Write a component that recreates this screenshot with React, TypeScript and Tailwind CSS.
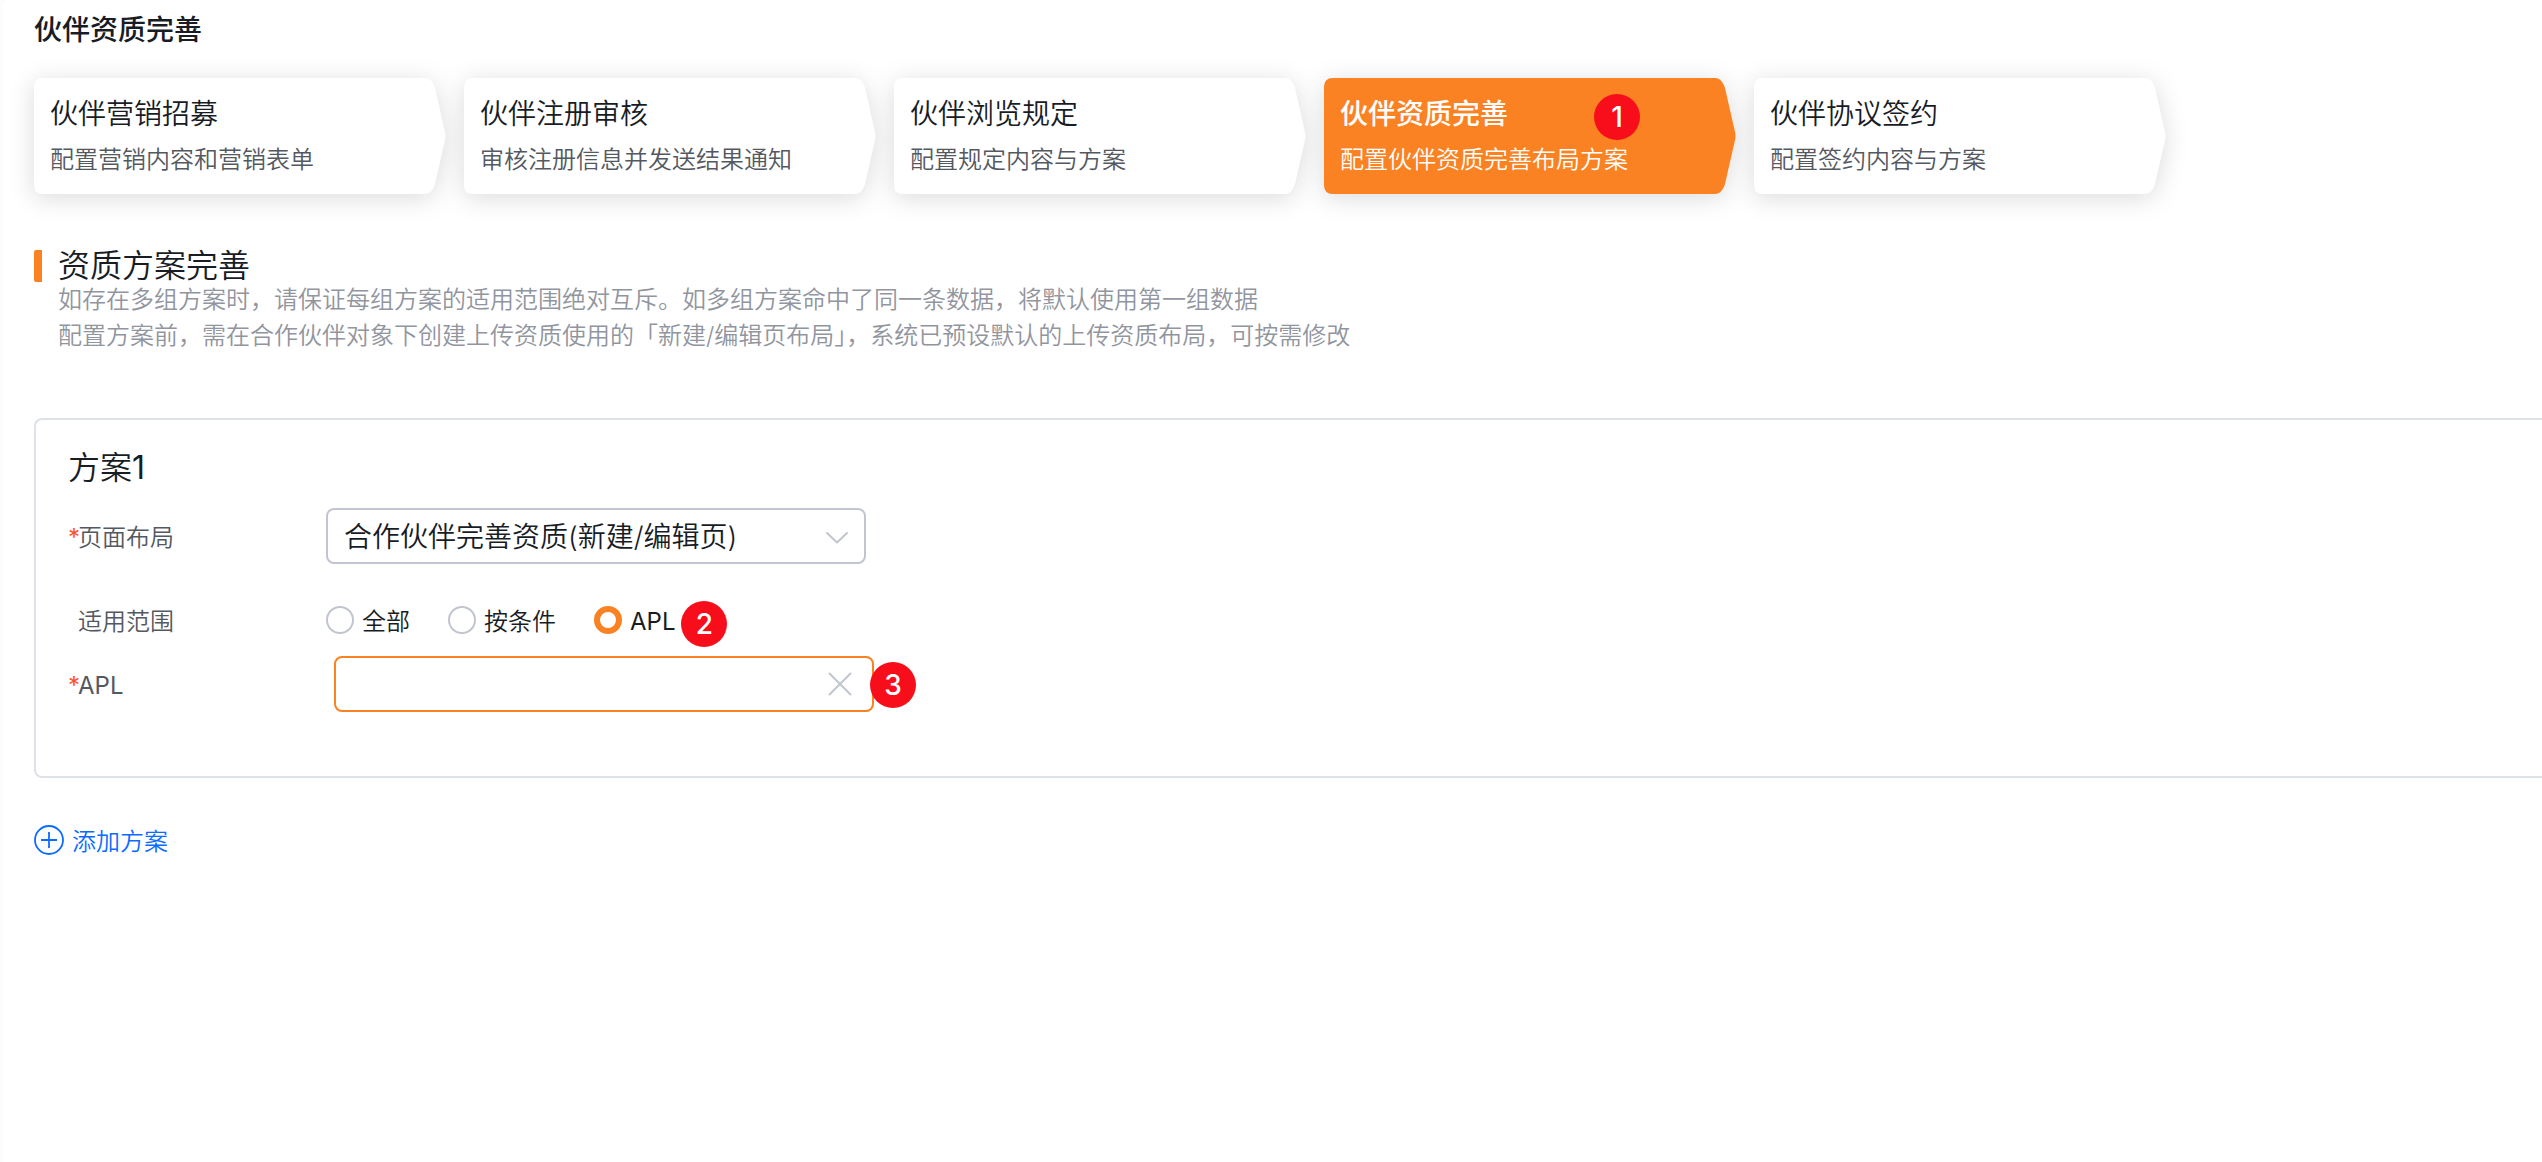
type Step = {
  title: string
  desc: string
  badge?: number
}

const steps: Step[] = [
  { title: '伙伴营销招募', desc: '配置营销内容和营销表单' },
  { title: '伙伴注册审核', desc: '审核注册信息并发送结果通知' },
  { title: '伙伴浏览规定', desc: '配置规定内容与方案' },
  { title: '伙伴资质完善', desc: '配置伙伴资质完善布局方案', badge: 1 },
  { title: '伙伴协议签约', desc: '配置签约内容与方案' },
]

const ACTIVE_STEP = 3

const scopes = [
  { value: 'all', label: '全部' },
  { value: 'condition', label: '按条件' },
  { value: 'apl', label: 'APL' },
]

function Badge({ n }: { n: number }) {
  return (
    <span className="flex size-[46px] items-center justify-center rounded-full bg-[#f80d1b] text-[28px] leading-none font-medium text-white">
      {n}
    </span>
  )
}

function StepCard({ step, active }: { step: Step; active: boolean }) {
  return (
    <li className="relative w-[412px] shrink-0">
      <svg
        className={
          active
            ? 'absolute inset-0 size-full overflow-visible text-[#fa8223] drop-shadow-[0_4px_12px_rgba(0,0,0,0.14)]'
            : 'absolute inset-0 size-full overflow-visible text-white drop-shadow-[0_4px_12px_rgba(0,0,0,0.14)]'
        }
        viewBox="0 0 412 116"
        preserveAspectRatio="none"
        fill="currentColor"
        aria-hidden="true"
      >
        <path d="M9 0H391C396 0 399 4 401 10L411 54Q412 58 411 62L401 106C399 112 396 116 391 116H9Q0 116 0 107V9Q0 0 9 0Z" />
      </svg>
      <a href="#" className="relative block px-4 pt-4 pb-3">
        <span className={active ? 'block text-[28px] leading-10 font-medium text-white' : 'block text-[28px] leading-10 text-[#181c25]'}>
          {step.title}
        </span>
        <span className={active ? 'block pt-1 text-2xl leading-11 text-white' : 'block pt-1 text-2xl leading-11 text-[#545861]'}>
          {step.desc}
        </span>
      </a>
      {step.badge && (
        <div className="absolute top-4 right-24">
          <Badge n={step.badge} />
        </div>
      )}
    </li>
  )
}

function FieldLabel({ text, htmlFor, required }: { text: string; htmlFor?: string; required?: boolean }) {
  return (
    <label htmlFor={htmlFor} className="flex w-[258px] shrink-0 pt-1 text-2xl leading-9 text-[#545861]">
      <span className="w-2.5 font-normal text-[#ff522a]">{required ? '*' : ''}</span>
      <span className={text === 'APL' ? 'font-normal' : ''}>{text}</span>
    </label>
  )
}

export default function App() {
  return (
    <div className="min-h-screen overflow-hidden bg-[#fcfcfc] pl-0.5 font-['Inter','Noto_Sans_CJK_SC',sans-serif] font-[350] text-[#181c25]">
      <main className="min-h-screen rounded-tl-lg bg-white pt-2 pl-8">
        <h1 className="pt-0.5 text-[28px] leading-10 font-medium">伙伴资质完善</h1>

        <ol className="mt-7 flex gap-[18px]">
          {steps.map((step, i) => (
            <StepCard key={step.title} step={step} active={i === ACTIVE_STEP} />
          ))}
        </ol>

        <section className="mt-14">
          <div className="flex items-center gap-4">
            <span className="h-8 w-2 rounded-l-xs bg-[#fa8223]" />
            <h2 className="text-[32px] leading-8">资质方案完善</h2>
          </div>
          <div className="pl-6 text-2xl leading-9 text-[#91959e]">
            <p>如存在多组方案时，请保证每组方案的适用范围绝对互斥。如多组方案命中了同一条数据，将默认使用第一组数据</p>
            <p>配置方案前，需在合作伙伴对象下创建上传资质使用的「新建/编辑页布局」，系统已预设默认的上传资质布局，可按需修改</p>
          </div>
        </section>

        <section className="mt-16 rounded-l-lg border-2 border-r-0 border-[#dee1e8] px-8 pt-7 pb-16">
          <h3 className="text-[32px] leading-10">
            方案<span className="font-normal">1</span>
          </h3>

          <div className="mt-5 flex items-center">
            <FieldLabel text="页面布局" htmlFor="layout" required />
            <div className="relative">
              <select
                id="layout"
                className="block h-14 w-[540px] appearance-none rounded-lg border-2 border-[#c1c5ce] bg-white px-4 pt-0.5 text-[28px]"
              >
                <option>合作伙伴完善资质(新建/编辑页)</option>
              </select>
              <svg
                className="pointer-events-none absolute top-4 right-4 size-6 text-[#c1c5ce]"
                viewBox="0 0 24 24"
                fill="none"
                stroke="currentColor"
                strokeWidth="2"
                strokeLinecap="round"
                strokeLinejoin="round"
                aria-hidden="true"
              >
                <path d="M1 9L11 18.5L21 9" />
              </svg>
            </div>
          </div>

          <div className="mt-8 flex h-12 items-center">
            <FieldLabel text="适用范围" />
            <div className="flex gap-[38px]">
              {scopes.map((scope) => (
                <label key={scope.value} className="flex items-center gap-2 text-2xl leading-9">
                  <input
                    type="radio"
                    name="scope"
                    value={scope.value}
                    defaultChecked={scope.value === 'apl'}
                    className="size-7 appearance-none rounded-full border-2 border-[#c1c5ce] bg-white checked:border-6 checked:border-[#fa8223]"
                  />
                  <span className={scope.value === 'apl' ? 'pt-1 font-normal' : 'pt-1'}>{scope.label}</span>
                </label>
              ))}
            </div>
            <div className="pt-2 pl-1.5">
              <Badge n={2} />
            </div>
          </div>

          <div className="mt-3 flex items-center">
            <FieldLabel text="APL" htmlFor="apl" required />
            <div className="relative ml-2">
              <input
                id="apl"
                type="text"
                className="block h-14 w-[540px] rounded-lg border-2 border-[#fa8223] bg-white pr-14 pl-4 text-[28px] outline-none"
              />
              <button type="button" aria-label="清空" className="absolute top-4 right-[22px] text-[#c1c5ce]">
                <svg
                  className="size-6"
                  viewBox="0 0 24 24"
                  fill="none"
                  stroke="currentColor"
                  strokeWidth="2"
                  strokeLinecap="round"
                  aria-hidden="true"
                >
                  <path d="M1.5 1.5L22.5 22.5M22.5 1.5L1.5 22.5" />
                </svg>
              </button>
              <div className="absolute top-1.5 -right-[42px]">
                <Badge n={3} />
              </div>
            </div>
          </div>
        </section>

        <button type="button" className="mt-10 flex items-center gap-2 text-2xl leading-10 text-[#0c6cff]">
          <svg className="size-[30px]" viewBox="0 0 30 30" fill="none" stroke="currentColor" strokeWidth="1.8" aria-hidden="true">
            <circle cx="15" cy="15" r="14" />
            <path d="M15 7V23M7 15H23" />
          </svg>
          <span className="pt-1">添加方案</span>
        </button>
      </main>
    </div>
  )
}
